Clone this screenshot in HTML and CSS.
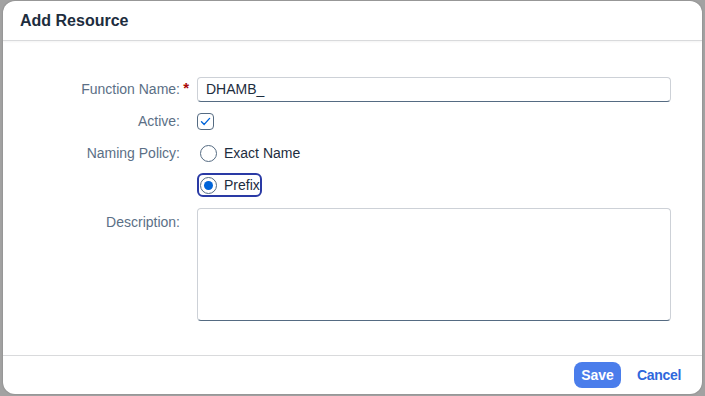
FILE: index.html
```html
<!DOCTYPE html>
<html>
<head>
<meta charset="utf-8">
<link rel="stylesheet" href="styles.css">
</head>
<body>
<div class="dialog">
  <header class="header"><h1 class="title">Add Resource</h1></header>
  <main class="content">
    <div class="form">
      <label class="label required">Function Name:</label>
      <div class="field"><div class="input">DHAMB_</div></div>

      <label class="label">Active:</label>
      <div class="field">
        <span class="checkbox">
          <svg width="13" height="13" viewBox="0 0 13 13"><path d="M2.5 6.8 L5.2 9.4 L10.6 3.4" fill="none" stroke="#0064d9" stroke-width="1.4" stroke-linecap="round" stroke-linejoin="round"/></svg>
        </span>
      </div>

      <label class="label">Naming Policy:</label>
      <div class="field">
        <span class="radio-item"><span class="radio"></span><span class="radio-text">Exact Name</span></span>
      </div>

      <span class="label"></span>
      <div class="field">
        <span class="radio-item focused"><span class="radio checked"></span><span class="radio-text">Prefix</span></span>
      </div>

      <label class="label label-top">Description:</label>
      <div class="field field-top"><div class="textarea"></div></div>
    </div>
  </main>
  <footer class="footer">
    <button class="btn btn-primary">Save</button>
    <button class="btn btn-ghost">Cancel</button>
  </footer>
</div>
</body>
</html>
```
FILE: styles.css
```css
* { box-sizing: border-box; }
html, body { height: 100%; }
body {
  margin: 0;
  background: #a2a2a2;
  font-family: "Liberation Sans", Arial, sans-serif;
  padding: 1px 3px 2px 3px;
}
.dialog {
  height: 393px;
  background: #fff;
  border-radius: 12px;
  display: flex;
  flex-direction: column;
  overflow: hidden;
  box-shadow: 0 0 2px rgba(0,0,0,0.25);
}
.header {
  height: 40px;
  flex: none;
  display: flex;
  align-items: center;
  padding-left: 17px;
  border-bottom: 1px solid #d9dadc;
  box-shadow: 0 1px 2px rgba(0,0,0,0.05);
}
.title {
  margin: 0;
  font-size: 16px;
  font-weight: bold;
  color: #1d2d3e;
}
.content {
  flex: 1;
  padding: 32px 31px 0 0;
}
.form {
  display: grid;
  grid-template-columns: 177px 1fr;
  column-gap: 17px;
  grid-auto-rows: 32px;
}
.label {
  position: relative;
  text-align: right;
  color: #5b6f86;
  font-size: 14px;
  align-self: center;
}
.label.required::after {
  content: "*";
  position: absolute;
  right: -9px;
  top: -2px;
  color: #aa0808;
  font-weight: bold;
  font-size: 15px;
}
.label-top { align-self: start; margin-top: 13px; }
.field {
  display: flex;
  align-items: center;
}
.field-top { align-items: flex-start; padding-top: 7px; }
.form > .field-top, .form > .label-top { grid-row: span 4; }
.input {
  width: 100%;
  height: 25px;
  border: 1px solid #cdd1d7;
  border-bottom-color: #556b82;
  border-radius: 4px;
  padding: 0 8px;
  font-size: 14px;
  line-height: 23px;
  color: #1d2d3e;
}
.checkbox {
  width: 17px;
  height: 17px;
  border: 1px solid #556b82;
  border-radius: 4px;
  display: flex;
  align-items: center;
  justify-content: center;
  margin-top: 1px;
}
.checkbox svg { display: block; }
.radio-item {
  display: inline-flex;
  align-items: center;
  gap: 7px;
  height: 24px;
  padding: 0 0 0 1px;
  border: 2px solid transparent;
  border-radius: 6px;
  margin-left: 0;
}
.radio-item.focused { border-color: #2a3aa5; }
.radio {
  width: 17px;
  height: 17px;
  border-radius: 50%;
  border: 1px solid #556b82;
  position: relative;
}
.radio.checked { border-color: #556b82; }
.radio.checked::after {
  content: "";
  position: absolute;
  left: 3px;
  top: 3px;
  width: 9px;
  height: 9px;
  border-radius: 50%;
  background: #0064d9;
}
.radio-text { font-size: 14px; color: #1d2d3e; }
.textarea {
  width: 100%;
  height: 113px;
  border: 1px solid #cdd1d7;
  border-bottom-color: #556b82;
  border-radius: 4px;
}
.footer {
  height: 39px;
  flex: none;
  border-top: 1px solid #d9dadc;
  display: flex;
  align-items: center;
  justify-content: flex-end;
  padding-right: 13px;
  gap: 8px;
}
.btn {
  font-family: "Liberation Sans", Arial, sans-serif;
  font-size: 14px;
  font-weight: bold;
  height: 26px;
  border-radius: 8px;
  border: none;
  padding: 0 7px;
  cursor: pointer;
}
.btn-primary { background: #4a7deb; color: #fff; }
.btn-ghost { background: transparent; color: #2f67dc; padding: 0 8px; letter-spacing: -0.3px; }
```
